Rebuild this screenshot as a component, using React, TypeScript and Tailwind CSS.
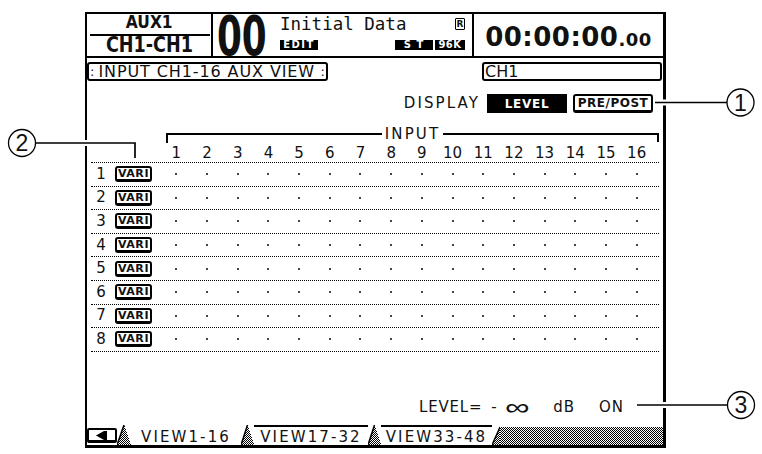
import React from "react";

const COLS = Array.from({ length: 16 }, (_, i) => i + 1);
const ROWS = Array.from({ length: 8 }, (_, i) => i + 1);

// number | VARI | 16 input columns | trailing gutter
const GRID = "grid grid-cols-[20px_50px_repeat(16,minmax(0,1fr))_7px]";

function Dither({ id }: { id: string }) {
  return (
    <defs>
      <pattern id={id} width="2" height="2" patternUnits="userSpaceOnUse">
        <rect width="1" height="1" fill="#000" />
        <rect x="1" y="1" width="1" height="1" fill="#000" />
      </pattern>
    </defs>
  );
}

// dithered wedge between two tabs
function TabGap({ w, id }: { w: number; id: string }) {
  return (
    <svg width={w} height={20} className="block shrink-0" shapeRendering="crispEdges">
      <Dither id={id} />
      <polygon points={`${w / 2},0 ${w},20 0,20`} fill={`url(#${id})`} />
      <line x1={w / 2} y1={0} x2={0} y2={20} stroke="#000" strokeWidth={1.5} shapeRendering="auto" />
    </svg>
  );
}

function Tab({ label, active, w }: { label: string; active?: boolean; w: string }) {
  return (
    <div
      className={`flex shrink-0 items-center justify-center text-[15px] leading-none tracking-[2.1px] ${w} ${
        active ? "pt-[5px]" : "border-t-2 border-black pt-[3px]"
      }`}
    >
      {label}
    </div>
  );
}

export default function App() {
  return (
    <div className="relative h-[454px] w-[762px] overflow-hidden bg-white font-['DejaVu_Sans',sans-serif] text-[#111]">
      <div className="pl-[85px] pt-[12px]">
        <div className="flex h-[436px] w-[581px] flex-col border-b-[3px] border-l-2 border-r-[3px] border-t-2 border-black">
          {/* header strip */}
          <div className="flex h-[44px] shrink-0 border-b-2 border-black">
            <div className="flex w-[126px] shrink-0 flex-col border-r-2 border-black">
              <div className="h-[16px] whitespace-nowrap text-center text-[18px] font-bold leading-[16px]">
                <span className="inline-block scale-x-[0.86]">AUX1</span>
              </div>
              <div className="ml-[3px] mt-[4px] h-[2px] w-[120px] bg-black" />
              <div className="h-[18px] whitespace-nowrap text-center text-[22px] font-bold leading-[18px]">
                <span className="inline-block scale-x-[0.8]">CH1-CH1</span>
              </div>
            </div>

            <div className="flex w-[261px] shrink-0 border-r-2 border-black">
              <div className="ml-[4px] mt-[1px] h-[42px] w-[50px] whitespace-nowrap text-[55px] font-bold leading-[42px]">
                <span className="inline-block origin-left scale-x-[0.65]">00</span>
              </div>
              <div className="ml-[13px] flex w-[185px] flex-col">
                <div className="flex h-[20px] items-center justify-between">
                  <span className="whitespace-nowrap font-['DejaVu_Sans_Mono',monospace] text-[17.5px] leading-[20px]">
                    Initial Data
                  </span>
                  <span className="flex h-[12px] w-[10px] items-center justify-center rounded-[1px] border border-black text-[9px] font-bold leading-none">
                    R
                  </span>
                </div>
                <div className="mt-[6px] flex h-[10px]">
                  <span className="flex w-[38px] items-center justify-center bg-black text-[10px] font-bold leading-none tracking-[1.5px] text-white">
                    EDIT
                  </span>
                  <span className="ml-auto flex w-[38px] items-center justify-center whitespace-pre bg-black text-[10px] font-bold leading-none tracking-[1px] text-white">
                    S T
                  </span>
                  <span className="ml-[2px] flex w-[30px] items-center justify-center bg-black text-[10px] font-bold leading-none tracking-[0.5px] text-white">
                    96K
                  </span>
                </div>
              </div>
            </div>

            <div className="flex flex-1 justify-center pt-[10px]">
              <div className="flex items-baseline whitespace-nowrap font-bold leading-none">
                <span className="text-[26px] tracking-[0.5px]">00:00:00</span>
                <span className="text-[18px] tracking-[0.5px]">.00</span>
              </div>
            </div>
          </div>

          {/* title + channel name */}
          <div className="mt-[4px] flex h-[19px] shrink-0 justify-between pr-px">
            <div className="flex w-[241px] items-center rounded-[3px] border-2 border-black">
              <span className="ml-[1px] text-[13px] leading-none">:</span>
              <span className="ml-[4px] whitespace-nowrap text-[16px] leading-none tracking-[0.9px]">
                INPUT CH1-16 AUX VIEW
              </span>
              <span className="ml-auto mr-[1px] text-[13px] leading-none">:</span>
            </div>
            <div className="flex w-[180px] items-center rounded-[3px] border-2 border-black pl-[1px]">
              <span className="text-[16px] leading-none">CH1</span>
            </div>
          </div>

          {/* display mode */}
          <div className="mt-[13px] flex h-[19px] shrink-0 items-center justify-end pr-[10px]">
            <span className="text-[15px] leading-none tracking-[2.1px]">DISPLAY</span>
            <span className="ml-[7px] flex h-[19px] w-[80px] items-center justify-center bg-black text-[12px] font-bold leading-none tracking-[0.75px] text-white">
              LEVEL
            </span>
            <span className="ml-[6px] flex h-[19px] w-[80px] items-center justify-center rounded-[3px] border-2 border-b-[3px] border-black text-[12px] font-bold leading-none tracking-[0.5px]">
              PRE/POST
            </span>
          </div>

          {/* INPUT bracket */}
          <div className="ml-[79px] mr-[4px] mt-[14px] flex h-[16px] shrink-0">
            <div className="mt-[6px] h-[10px] flex-1 border-l-2 border-t-2 border-black" />
            <span className="px-[3px] text-[15px] leading-none tracking-[2.1px]">INPUT</span>
            <div className="mt-[6px] h-[9px] flex-1 border-r-2 border-t-2 border-black" />
          </div>

          {/* send matrix */}
          <div className="ml-[4px] w-[568px] shrink-0">
            <div className={`${GRID} h-[19px] items-end pb-[1px] text-[15px] leading-none`}>
              <span />
              <span />
              {COLS.map((c) => (
                <span key={c} className="text-center">
                  {c}
                </span>
              ))}
              <span />
            </div>
            <div className="border-t border-dotted border-black">
              {ROWS.map((r) => (
                <div key={r} className={`${GRID} h-[23.6px] items-center border-b border-dotted border-black`}>
                  <span className="text-center text-[15px] leading-none">{r}</span>
                  <div className="pl-[4px]">
                    <span className="flex h-[16px] w-[37px] items-center justify-center rounded-[3px] border-2 border-b-[3px] border-black text-[11px] font-bold leading-none tracking-[0.6px]">
                      VARI
                    </span>
                  </div>
                  {COLS.map((c) => (
                    <div key={c} className="flex justify-center">
                      <span className="h-[2px] w-[2px] bg-[#444]" />
                    </div>
                  ))}
                  <span />
                </div>
              ))}
            </div>
          </div>

          <div className="flex-1" />

          {/* parameter readout */}
          <div className="mb-[9px] flex h-[18px] shrink-0 items-center justify-end whitespace-nowrap pr-[39px] text-[15px] leading-none">
            <span className="tracking-[0.8px]">LEVEL=</span>
            <span className="ml-[9px]">-</span>
            <span className="ml-[12px] inline-block scale-x-[1.5] text-[23px] font-light leading-none">∞</span>
            <span className="ml-[28px] tracking-[1px]">dB</span>
            <span className="ml-[24px] tracking-[1px]">ON</span>
          </div>

          {/* page tabs */}
          <div className="flex h-[20px] shrink-0">
            <div className="mt-[3px] flex h-[15px] w-[30px] shrink-0 items-center justify-center rounded-[2px] border-2 border-b-[3px] border-black">
              <svg width="12" height="9" className="block">
                <polygon points="0,4.5 8,0 8,9" fill="#000" />
                <rect x="8" y="0" width="3" height="9" fill="#000" />
              </svg>
            </div>
            <TabGap w={14} id="dg1" />
            <Tab label="VIEW1-16" active w="w-[110px]" />
            <TabGap w={13} id="dg2" />
            <Tab label="VIEW17-32" w="w-[114px]" />
            <TabGap w={13} id="dg3" />
            <Tab label="VIEW33-48" w="w-[111px]" />
            <svg width="8" height="20" className="block shrink-0" shapeRendering="crispEdges">
              <Dither id="dg4" />
              <polygon points="8,2 8,20 0,20" fill="url(#dg4)" />
              <line x1="0" y1="20" x2="8" y2="2" stroke="#000" strokeWidth="1.5" shapeRendering="auto" />
            </svg>
            <div className="mt-[2px] flex-1 bg-[image:repeating-conic-gradient(#000_0_25%,#fff_0_50%)] bg-[length:2px_2px]" />
          </div>
        </div>
      </div>

      {/* numbered callouts */}
      <svg className="pointer-events-none absolute left-0 top-0" width="762" height="454">
        <g stroke="#fff" strokeWidth="6">
          <line x1="657" y1="102.5" x2="727" y2="102.5" />
          <line x1="37" y1="143" x2="135" y2="143" />
          <line x1="630" y1="405" x2="727" y2="405" />
        </g>
        <g stroke="#000" strokeWidth="1.7" fill="none">
          <line x1="655" y1="102.5" x2="727" y2="102.5" />
          <polyline points="36,143 135,143 135,158" />
          <line x1="637" y1="405" x2="727" y2="405" />
        </g>
        <g stroke="#000" strokeWidth="1.3" fill="#fff">
          <circle cx="740.5" cy="102.5" r="13.5" />
          <circle cx="22" cy="143" r="13.5" />
          <circle cx="741" cy="405" r="13.5" />
        </g>
        <g fontFamily="'Liberation Sans', Arial, sans-serif" fontSize="23" textAnchor="middle" fill="#111">
          <text x="740.5" y="110.8">1</text>
          <text x="22" y="151.3">2</text>
          <text x="741" y="413.3">3</text>
        </g>
      </svg>
    </div>
  );
}
